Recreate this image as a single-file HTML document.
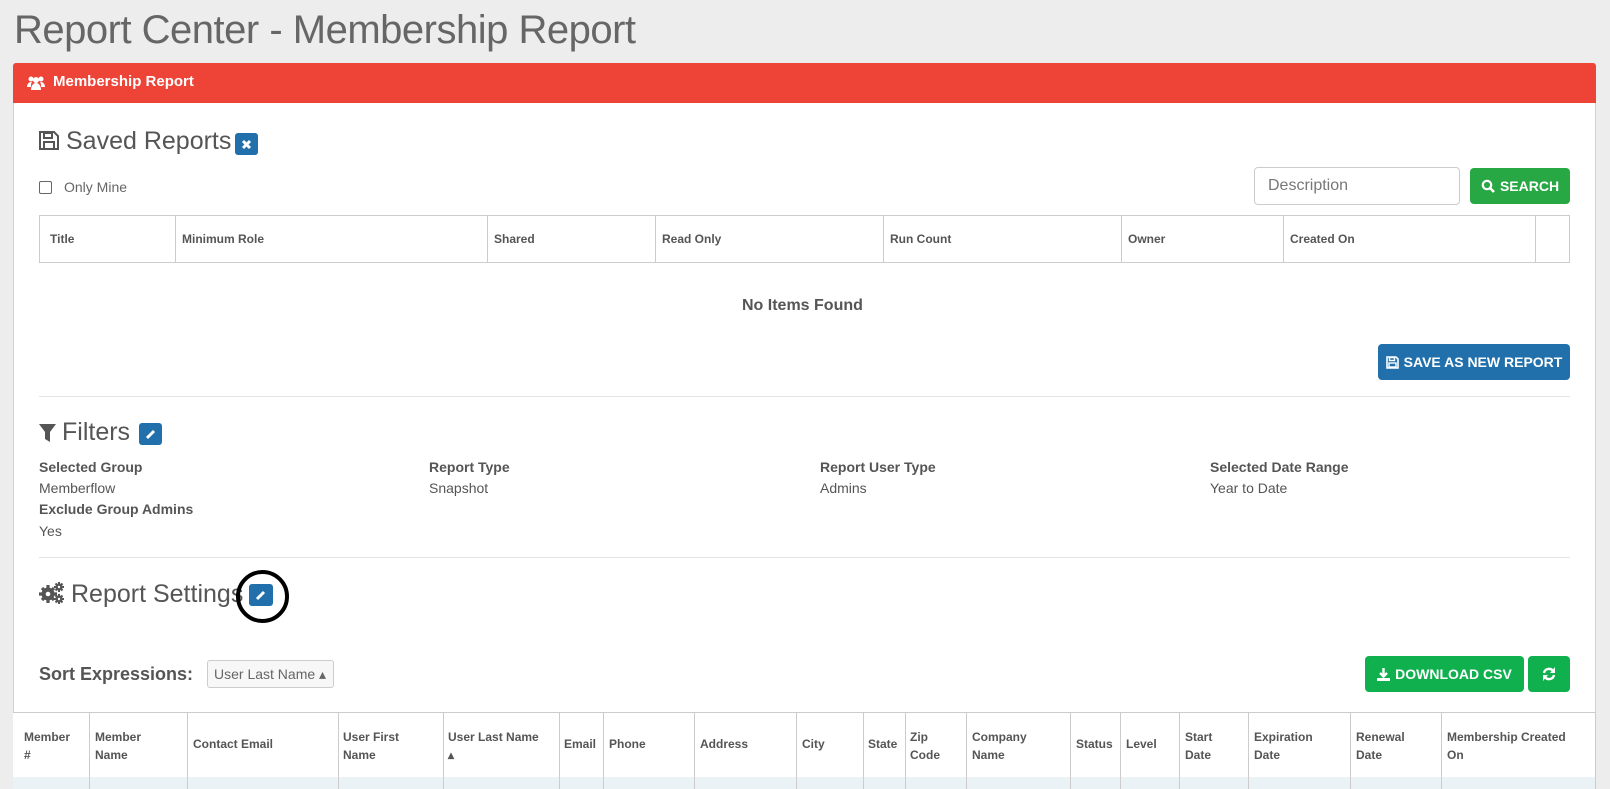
<!DOCTYPE html>
<html><head><meta charset="utf-8"><style>
*{box-sizing:border-box;margin:0;padding:0}
body{width:1610px;height:789px;overflow:hidden;background:#ededed;font-family:"Liberation Sans",sans-serif;color:#555;position:relative}
.a{position:absolute;white-space:nowrap}
h1{position:absolute;left:14px;top:8px;font-size:40px;font-weight:400;color:#666;letter-spacing:-0.5px}
.panel{position:absolute;left:13px;top:63px;width:1583px;height:726px;background:#fff;border:1px solid #d0d0d0;border-radius:3px}
.hdr{position:absolute;left:13px;top:63px;width:1583px;height:40px;background:#ee4337;border-radius:3px 3px 0 0;color:#fff;font-weight:bold;font-size:15px}
.h2{font-size:25px;color:#555}
.btnb{background:#2170ab;border-radius:3px;position:absolute}
.th{position:absolute;font-size:12px;font-weight:bold;color:#555}
.line{position:absolute;background:#ccc}
.lbl{font-size:14px;font-weight:bold}
.val{font-size:14px}
.btn{position:absolute;color:#fff;font-weight:bold;font-size:14px;border-radius:4px;display:flex;align-items:center;justify-content:center;gap:5px}
</style></head><body>
<h1>Report Center - Membership Report</h1>
<div class="panel"></div>
<div class="hdr"><svg class="a" style="left:14px;top:12px" width="18" height="16" viewBox="0 0 18 16"><circle cx="4" cy="4" r="2.5" fill="#fff"/><circle cx="14" cy="4" r="2.5" fill="#fff"/><circle cx="9" cy="5" r="3" fill="#fff"/><path d="M0 12c0-3 2-5 4-5h1c-1 1-1 3-1 5zM18 12c0-3-2-5-4-5h-1c1 1 1 3 1 5zM4 15c0-4 2-7 5-7s5 3 5 7z" fill="#fff"/></svg><span class="a" style="left:40px;top:10px">Membership Report</span></div>

<svg class="a" style="left:39px;top:131px" width="20" height="20" viewBox="0 0 20 20"><path d="M2 1h13l4 4v13H1V1z" fill="none" stroke="#555" stroke-width="2"/><rect x="5" y="2" width="8" height="5" fill="none" stroke="#555" stroke-width="2"/><rect x="5" y="11" width="10" height="7" fill="none" stroke="#555" stroke-width="2"/></svg>
<div class="a h2" style="left:66px;top:127px">Saved Reports</div>
<div class="btnb" style="left:235px;top:133px;width:23px;height:22px"><svg style="position:absolute;left:6px;top:6px" width="11" height="11"><path d="M2 2l7 7M9 2l-7 7" stroke="#fff" stroke-width="3"/></svg></div>
<div class="a" style="left:39px;top:181px;width:13px;height:13px;border:1px solid #666;border-radius:2px"></div>
<div class="a val" style="left:64px;top:179px;color:#666">Only Mine</div>
<div class="a" style="left:1254px;top:167px;width:206px;height:38px;border:1px solid #ccc;border-radius:4px"></div>
<div class="a" style="left:1268px;top:177px;font-size:16px;color:#777">Description</div>
<div class="btn" style="left:1470px;top:168px;width:100px;height:36px;background:#28a745"><svg width="14" height="14" viewBox="0 0 14 14"><circle cx="6" cy="6" r="4.2" fill="none" stroke="#fff" stroke-width="2.2"/><path d="M9 9l4 4" stroke="#fff" stroke-width="2.6"/></svg>SEARCH</div>

<div class="a" style="left:39px;top:215px;width:1531px;height:48px;border:1px solid #ccc"></div>
<div class="line" style="left:175px;top:215px;width:1px;height:48px"></div>
<div class="line" style="left:487px;top:215px;width:1px;height:48px"></div>
<div class="line" style="left:655px;top:215px;width:1px;height:48px"></div>
<div class="line" style="left:883px;top:215px;width:1px;height:48px"></div>
<div class="line" style="left:1121px;top:215px;width:1px;height:48px"></div>
<div class="line" style="left:1283px;top:215px;width:1px;height:48px"></div>
<div class="line" style="left:1535px;top:215px;width:1px;height:48px"></div>
<div class="th" style="left:50px;top:232px">Title</div>
<div class="th" style="left:182px;top:232px">Minimum Role</div>
<div class="th" style="left:494px;top:232px">Shared</div>
<div class="th" style="left:662px;top:232px">Read Only</div>
<div class="th" style="left:890px;top:232px">Run Count</div>
<div class="th" style="left:1128px;top:232px">Owner</div>
<div class="th" style="left:1290px;top:232px">Created On</div>
<div class="a" style="left:742px;top:297px;font-size:16px;font-weight:bold">No Items Found</div>
<div class="btn" style="left:1378px;top:344px;width:192px;height:36px;background:#2170ab"><svg width="13" height="13" viewBox="0 0 13 13"><path d="M1 1h9l2 2v9H1z" fill="none" stroke="#fff" stroke-width="1.6"/><rect x="3.5" y="1.5" width="5" height="3" fill="none" stroke="#fff" stroke-width="1.4"/><rect x="3" y="7" width="7" height="4" fill="none" stroke="#fff" stroke-width="1.4"/></svg>SAVE AS NEW REPORT</div>
<div class="line" style="left:39px;top:396px;width:1531px;height:1px;background:#e3e3e3"></div>

<svg class="a" style="left:39px;top:424px" width="17" height="18" viewBox="0 0 17 18"><path d="M0 0h17l-6 8v10l-5-3V8z" fill="#555"/></svg>
<div class="a h2" style="left:62px;top:418px">Filters</div>
<div class="btnb" style="left:139px;top:423px;width:23px;height:22px"><svg style="position:absolute;left:6px;top:5px" width="12" height="12"><path d="M2 10l7-7" stroke="#fff" stroke-width="3"/></svg></div>
<div class="a lbl" style="left:39px;top:459px">Selected Group</div>
<div class="a val" style="left:39px;top:480px">Memberflow</div>
<div class="a lbl" style="left:39px;top:501px">Exclude Group Admins</div>
<div class="a val" style="left:39px;top:523px">Yes</div>
<div class="a lbl" style="left:429px;top:459px">Report Type</div>
<div class="a val" style="left:429px;top:480px">Snapshot</div>
<div class="a lbl" style="left:820px;top:459px">Report User Type</div>
<div class="a val" style="left:820px;top:480px">Admins</div>
<div class="a lbl" style="left:1210px;top:459px">Selected Date Range</div>
<div class="a val" style="left:1210px;top:480px">Year to Date</div>
<div class="line" style="left:39px;top:557px;width:1531px;height:1px;background:#e3e3e3"></div>

<svg class="a" style="left:39px;top:582px" width="26" height="22" viewBox="0 0 26 22"><g fill="#555"><circle cx="9" cy="12" r="6.5"/><g stroke="#555" stroke-width="3.2"><path d="M9 3v18M0 12h18M3 6l12 12M15 6L3 18"/></g><circle cx="9" cy="12" r="2.3" fill="#fff"/><circle cx="20" cy="5" r="3.6"/><g stroke="#555" stroke-width="2"><path d="M20 0v10M15 5h10M16.5 1.5l7 7M23.5 1.5l-7 7"/></g><circle cx="20" cy="5" r="1.2" fill="#fff"/><circle cx="20" cy="17" r="3.6"/><g stroke="#555" stroke-width="2"><path d="M20 12v10M15 17h10M16.5 13.5l7 7M23.5 13.5l-7 7"/></g><circle cx="20" cy="17" r="1.2" fill="#fff"/></g></svg>
<div class="a h2" style="left:71px;top:580px">Report Settings</div>
<div class="btnb" style="left:249px;top:584px;width:24px;height:22px"><svg style="position:absolute;left:6px;top:5px" width="12" height="12"><path d="M2 10l7-7" stroke="#fff" stroke-width="3"/></svg></div>
<div class="a" style="left:236px;top:570px;width:53px;height:53px;border:4px solid #000;border-radius:50%"></div>

<div class="a" style="left:39px;top:664px;font-size:18px;font-weight:bold;color:#555">Sort Expressions:</div>
<div class="a" style="left:207px;top:660px;width:127px;height:28px;border:1px solid #ccc;border-radius:3px;background:#f7f7f7;font-size:14px;padding:5px 0 0 6px;color:#666">User Last Name &#9652;</div>
<div class="btn" style="left:1365px;top:656px;width:159px;height:36px;background:#10b04f"><svg width="13" height="13" viewBox="0 0 13 13"><path d="M6.5 0v8M3 5l3.5 3.5L10 5" fill="none" stroke="#fff" stroke-width="2.4"/><rect x="0" y="10" width="13" height="3" fill="#fff"/></svg>DOWNLOAD CSV</div>
<div class="btn" style="left:1528px;top:656px;width:42px;height:36px;background:#10b04f"><svg width="14" height="14" viewBox="0 0 14 14"><path d="M2 6a5 5 0 0 1 9-2M12 8a5 5 0 0 1-9 2" fill="none" stroke="#fff" stroke-width="2.4"/><path d="M13 0v6H8zM1 14V8h5z" fill="#fff"/></svg></div>

<div class="a" style="left:13px;top:712px;width:1583px;height:77px;background:#fff;border-top:1px solid #ccc"></div>
<div class="a" style="left:13px;top:777px;width:1583px;height:12px;background:#ebf2f6"></div>
<div class="line" style="left:89px;top:712px;width:1px;height:77px"></div>
<div class="line" style="left:187px;top:712px;width:1px;height:77px"></div>
<div class="line" style="left:338px;top:712px;width:1px;height:77px"></div>
<div class="line" style="left:443px;top:712px;width:1px;height:77px"></div>
<div class="line" style="left:559px;top:712px;width:1px;height:77px"></div>
<div class="line" style="left:603px;top:712px;width:1px;height:77px"></div>
<div class="line" style="left:694px;top:712px;width:1px;height:77px"></div>
<div class="line" style="left:796px;top:712px;width:1px;height:77px"></div>
<div class="line" style="left:863px;top:712px;width:1px;height:77px"></div>
<div class="line" style="left:905px;top:712px;width:1px;height:77px"></div>
<div class="line" style="left:966px;top:712px;width:1px;height:77px"></div>
<div class="line" style="left:1070px;top:712px;width:1px;height:77px"></div>
<div class="line" style="left:1120px;top:712px;width:1px;height:77px"></div>
<div class="line" style="left:1179px;top:712px;width:1px;height:77px"></div>
<div class="line" style="left:1248px;top:712px;width:1px;height:77px"></div>
<div class="line" style="left:1350px;top:712px;width:1px;height:77px"></div>
<div class="line" style="left:1441px;top:712px;width:1px;height:77px"></div>
<div class="line" style="left:1595px;top:712px;width:1px;height:77px"></div>
<div class="th" style="left:24px;top:728px;line-height:18px">Member<br>#</div>
<div class="th" style="left:95px;top:728px;line-height:18px">Member<br>Name</div>
<div class="th" style="left:193px;top:737px">Contact Email</div>
<div class="th" style="left:343px;top:728px;line-height:18px">User First<br>Name</div>
<div class="th" style="left:448px;top:728px;line-height:18px">User Last Name<br>&#9652;</div>
<div class="th" style="left:564px;top:737px">Email</div>
<div class="th" style="left:609px;top:737px">Phone</div>
<div class="th" style="left:700px;top:737px">Address</div>
<div class="th" style="left:802px;top:737px">City</div>
<div class="th" style="left:868px;top:737px">State</div>
<div class="th" style="left:910px;top:728px;line-height:18px">Zip<br>Code</div>
<div class="th" style="left:972px;top:728px;line-height:18px">Company<br>Name</div>
<div class="th" style="left:1076px;top:737px">Status</div>
<div class="th" style="left:1126px;top:737px">Level</div>
<div class="th" style="left:1185px;top:728px;line-height:18px">Start<br>Date</div>
<div class="th" style="left:1254px;top:728px;line-height:18px">Expiration<br>Date</div>
<div class="th" style="left:1356px;top:728px;line-height:18px">Renewal<br>Date</div>
<div class="th" style="left:1447px;top:728px;line-height:18px">Membership Created<br>On</div>
</body></html>
